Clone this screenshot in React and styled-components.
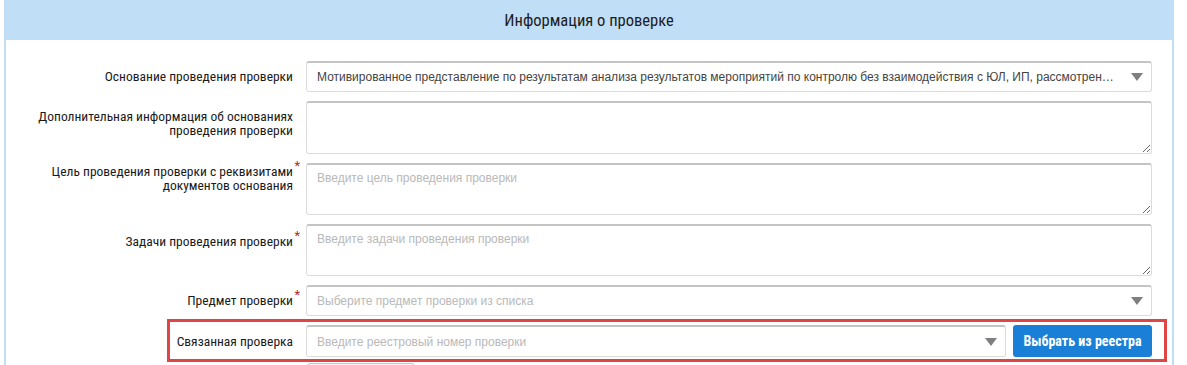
import React from 'react';
import styled, { createGlobalStyle } from 'styled-components';

const GlobalStyle = createGlobalStyle`
  html, body {
    margin: 0;
    padding: 0;
    background: #fff;
    overflow: hidden;
  }
`

const Panel = styled('div')`
  margin-left: 4px;
  width: 1170px;
  box-sizing: border-box;
  border: 2px solid #c0def5;
  border-top: none;
  background: #fff;
`

const Header = styled('div')`
  height: 40px;
  margin: 0 -2px;
  background: #c0def5;
  display: flex;
  align-items: center;
  justify-content: center;
  font-family: "Liberation Sans Narrow", "Roboto Condensed", "Liberation Sans", sans-serif;
  font-size: 16.5px;
  color: #1c1c1c;
`

const Form = styled('div')`
  display: flex;
  flex-direction: column;
  gap: 9px;
  padding: 21px 20px 10px 0;
`

const Row = styled('div')`
  display: flex;
  flex-direction: row;
  height: ${props => props.h}px;
  position: relative;
`

const Highlight = styled(Row)`
  &::after {
    content: '';
    position: absolute;
    top: -6px;
    bottom: -5px;
    left: 161px;
    right: -15px;
    border: 3px solid #e04545;
    pointer-events: none;
  }
`

const Label = styled('div')`
  width: 300px;
  flex: none;
  box-sizing: border-box;
  padding: ${props => props.top}px 13px 0 0;
  text-align: right;
  font-family: "Liberation Sans Narrow", "Roboto Condensed", "Liberation Sans", sans-serif;
  font-size: 13.5px;
  line-height: 14px;
  color: #1a1a1a;
`

const LabelText = styled('span')`
  position: relative;
`

const Star = styled('span')`
  position: absolute;
  right: -7px;
  top: -4px;
  color: #b52a2a;
  font-size: 13px;
`

const Field = styled('div')`
  flex: 1;
  min-width: 0;
  display: flex;
  flex-direction: row;
  gap: 7px;
`

const Box = styled('div')`
  flex: 1;
  box-sizing: border-box;
  border: 1px solid #dcdcdc;
  border-top: 2px solid #c4c4c4;
  border-radius: 3px;
  display: flex;
  align-items: center;
  padding: 0 8px 0 10px;
  font-family: "Liberation Sans", Arial, sans-serif;
  font-size: 12px;
  color: ${props => props.placeholder ? '#b9b9b9' : '#444'};
  min-width: 0;
`

const BoxText = styled('div')`
  flex: 1;
  white-space: nowrap;
  overflow: hidden;
  text-overflow: ellipsis;
  min-width: 0;
`

const Arrow = styled('div')`
  width: 0;
  height: 0;
  margin-left: 14px;
  border-left: 6px solid transparent;
  border-right: 6px solid transparent;
  border-top: 8px solid #7f7f7f;
  flex: none;
`

const Area = styled('textarea')`
  flex: 1;
  box-sizing: border-box;
  border: 1px solid #dcdcdc;
  border-top: 2px solid #c4c4c4;
  border-radius: 3px;
  padding: 6px 10px;
  resize: vertical;
  font-family: "Liberation Sans", Arial, sans-serif;
  font-size: 12px;
  color: #444;
  outline: none;
  &::placeholder {
    color: #b9b9b9;
  }
`

const Button = styled('div')`
  width: 139px;
  flex: none;
  box-sizing: border-box;
  background: #1a7fd6;
  border-radius: 3px;
  color: #fff;
  font-family: "Liberation Sans Narrow", "Roboto Condensed", "Liberation Sans", sans-serif;
  font-weight: bold;
  font-size: 14px;
  display: flex;
  align-items: center;
  justify-content: center;
`

const Footer = styled('div')`
  margin: -3px 0 0 301px;
  width: 106px;
  height: 30px;
  border: 1px solid #c9c9c9;
  border-radius: 3px;
  background: #f2f2f2;
`

function renderLabel(text, required) {
  return (
    <LabelText>
      {text}
      {required && <Star>*</Star>}
    </LabelText>
  )
}

const App = () => {
  return (
    <>
      <GlobalStyle />
      <Panel>
        <Header>Информация о проверке</Header>
        <Form>
          <Row h={31}>
            <Label top={8}>{renderLabel('Основание проведения проверки')}</Label>
            <Field>
              <Box>
                <BoxText>Мотивированное представление по результатам анализа результатов мероприятий по контролю без взаимодействия с ЮЛ, ИП, рассмотрения или предварительной проверки поступивших обращений</BoxText>
                <Arrow />
              </Box>
            </Field>
          </Row>
          <Row h={53}>
            <Label top={8}>Дополнительная информация об основаниях<br />{renderLabel('проведения проверки')}</Label>
            <Field>
              <Area />
            </Field>
          </Row>
          <Row h={52}>
            <Label top={1}>{renderLabel('Цель проведения проверки с реквизитами', true)}<br />документов основания</Label>
            <Field>
              <Area placeholder="Введите цель проведения проверки" />
            </Field>
          </Row>
          <Row h={52}>
            <Label top={10}>{renderLabel('Задачи проведения проверки', true)}</Label>
            <Field>
              <Area placeholder="Введите задачи проведения проверки" />
            </Field>
          </Row>
          <Row h={31}>
            <Label top={8}>{renderLabel('Предмет проверки', true)}</Label>
            <Field>
              <Box placeholder>
                <BoxText>Выберите предмет проверки из списка</BoxText>
                <Arrow />
              </Box>
            </Field>
          </Row>
          <Highlight h={32}>
            <Label top={9}>{renderLabel('Связанная проверка')}</Label>
            <Field>
              <Box placeholder>
                <BoxText>Введите реестровый номер проверки</BoxText>
                <Arrow />
              </Box>
              <Button>Выбрать из реестра</Button>
            </Field>
          </Highlight>
          <Footer />
        </Form>
      </Panel>
    </>
  )
}

export default App;
